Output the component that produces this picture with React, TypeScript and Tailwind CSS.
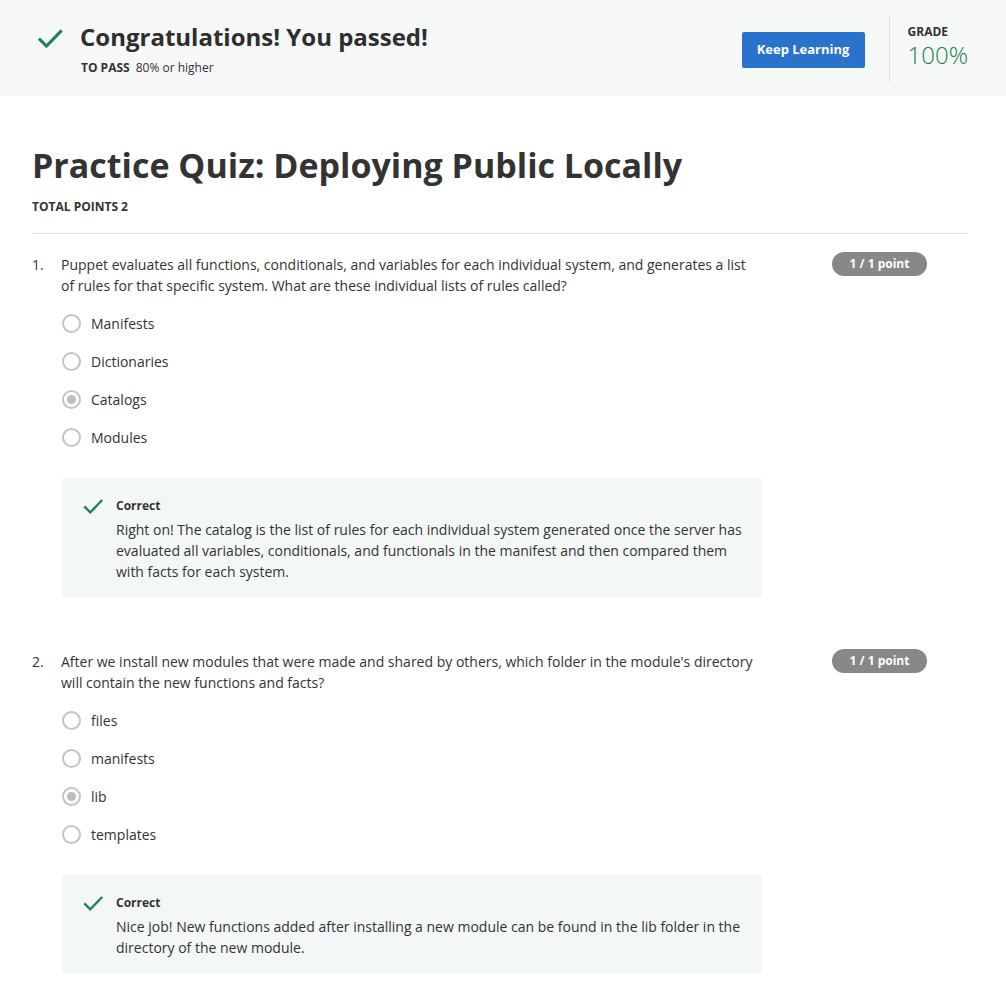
import React from "react";

const font = { fontFamily: '"Open Sans", "Noto Sans", Arial, sans-serif' };

type Question = {
  n: number;
  text: string;
  options: string[];
  selected: number;
  feedback: string;
};

const QUESTIONS: Question[] = [
  {
    n: 1,
    text: "Puppet evaluates all functions, conditionals, and variables for each individual system, and generates a list of rules for that specific system. What are these individual lists of rules called?",
    options: ["Manifests", "Dictionaries", "Catalogs", "Modules"],
    selected: 2,
    feedback:
      "Right on! The catalog is the list of rules for each individual system generated once the server has evaluated all variables, conditionals, and functionals in the manifest and then compared them with facts for each system.",
  },
  {
    n: 2,
    text: "After we install new modules that were made and shared by others, which folder in the module's directory will contain the new functions and facts?",
    options: ["files", "manifests", "lib", "templates"],
    selected: 2,
    feedback:
      "Nice job! New functions added after installing a new module can be found in the lib folder in the directory of the new module.",
  },
];

function Check({ className }: { className?: string }) {
  return (
    <svg viewBox="0 0 24 24" className={className} fill="none">
      <path d="M2.5 12.5 L9 19 L22 5.5" stroke="#1f8354" strokeWidth="2.6" />
    </svg>
  );
}

function Radio({ checked }: { checked: boolean }) {
  return (
    <span className="flex h-[19px] w-[19px] shrink-0 items-center justify-center rounded-full border-2 border-[#c4c4c4] bg-white">
      {checked && <span className="h-[9px] w-[9px] rounded-full bg-[#bdbdbd]" />}
    </span>
  );
}

function QuestionBlock({ q }: { q: Question }) {
  return (
    <div className="mb-[54px]">
      <div className="flex">
        <div className="w-[29px] shrink-0 text-[14px] leading-[21px] text-[#333]">{q.n}.</div>
        <div className="w-[700px] text-[14px] leading-[21px] text-[#333]">{q.text}</div>
        <div className="ml-[71px] mt-[-4px]">
          <span className="inline-flex h-[24px] w-[95px] items-center justify-center rounded-full bg-[#888] text-[12px] font-bold text-white">
            1 / 1 point
          </span>
        </div>
      </div>
      <div className="ml-[30px] mt-[17px] flex flex-col gap-[17px]">
        {q.options.map((o, i) => (
          <label key={o} className="flex h-[21px] items-center gap-[10px] text-[14px] text-[#333]">
            <Radio checked={i === q.selected} />
            <span>{o}</span>
          </label>
        ))}
      </div>
      <div className="ml-[30px] mt-[30px] flex w-[700px] bg-[#f3f8f6] pb-[15px] pl-[20px] pr-[20px] pt-[19px]">
        <Check className="mt-[-2px] h-[22px] w-[22px] shrink-0" />
        <div className="ml-[12px]">
          <div className="text-[12px] font-bold leading-[17px] text-[#333]">Correct</div>
          <div className="mt-[5px] text-[14px] leading-[21px] text-[#333]">{q.feedback}</div>
        </div>
      </div>
    </div>
  );
}

export default function App() {
  return (
    <div className="min-h-screen bg-white" style={font}>
      <div className="flex h-[96px] items-center bg-[#f5f8f7] pl-[36px] pr-[38px]">
        <Check className="mt-[-20px] h-[28px] w-[28px] shrink-0" />
        <div className="ml-[16px] mt-[0px]">
          <div className="text-[24px] font-bold leading-[32px] text-[#2e2e2e]">
            Congratulations! You passed!
          </div>
          <div className="mt-[7px] pl-[1px] text-[12px] leading-[16px] text-[#333]">
            <span className="font-bold">TO PASS</span>
            <span className="ml-[6px]">80% or higher</span>
          </div>
        </div>
        <div className="flex-1" />
        <button className="mt-[4px] h-[36px] w-[123px] rounded-[2px] bg-[#2a73cc] text-[13px] font-bold text-white">
          Keep Learning
        </button>
        <div className="ml-[24px] h-[67px] w-px self-center bg-[#dedede]" />
        <div className="ml-[18px] mt-[-2px]">
          <div className="text-[12px] font-bold leading-[14px] text-[#333]">GRADE</div>
          <div className="mt-[1px] text-[24px] leading-[30px] font-light text-[#1a7f4e]">100%</div>
        </div>
      </div>

      <div className="px-[32px] pt-[45px]">
        <h1 className="text-[34px] font-bold leading-[48px] text-[#333]">
          Practice Quiz: Deploying Public Locally
        </h1>
        <div className="mt-[9px] text-[12px] font-bold text-[#333]">TOTAL POINTS 2</div>
        <div className="mt-[17px] h-px w-[936px] bg-[#e1e1e1]" />
        <div className="pt-[20px]">
          {QUESTIONS.map((q) => (
            <QuestionBlock key={q.n} q={q} />
          ))}
        </div>
      </div>
    </div>
  );
}
